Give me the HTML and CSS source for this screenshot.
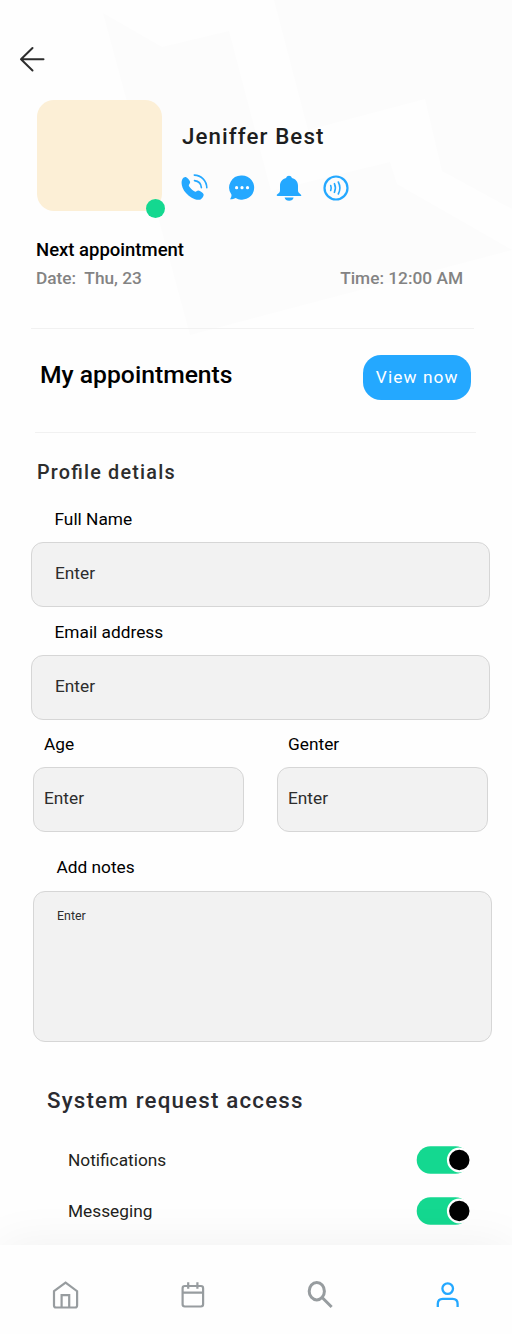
FILE: index.html
```html
<!DOCTYPE html>
<html lang="en">
<head>
<meta charset="utf-8">
<title>Profile</title>
<link rel="stylesheet" href="styles.css">
</head>
<body>
<div class="screen">
  <svg class="backdrop" width="512" height="340" viewBox="0 0 512 340" aria-hidden="true">
    <path d="M103 13 162 47 229 31 271 191 390 162 397 184 512 250 190 335Z"/>
    <path d="M274 0H512V209L442 171 425 99 308 130Z"/>
  </svg>
  <header class="topbar">
    <svg class="back" width="28" height="28" viewBox="0 0 28 28"><path d="M25.500 14.300H3M14.500 3 3 14.300l11.500 11.200"/></svg>
  </header>
  <section class="person">
    <div class="avatar"><span class="status"></span></div>
    <div class="person-info">
      <h1 class="name">Jeniffer Best</h1>
      <div class="actions">
        <svg width="28" height="28" viewBox="0 0 28 28">
          <path class="solid" d="M1.300 5.200C2.200 3.800 3.600 2.900 4.800 3.100 6.400 3.900 8 5.700 9 7.600 9.500 8.800 8.700 9.700 8 10.700 7.600 11.400 8 12.300 8.800 13.300 10.400 15.400 12.300 17.100 14.300 17.800 15.400 18.100 16 16.600 17.300 16.600 19.300 17 21.900 18.700 22.600 20.200 23 21.800 21.600 24.200 19.600 25.400 17.400 26.500 13.400 25.400 10.700 23.700 6.700 21.300 3.100 17.700 1.600 13.700.4 10.400.2 7.400 1.300 5.200Z"/>
          <path class="wave" d="M13.500 6.600c4 .5 6.600 3.200 6.900 7M13.300 1.100c7 .2 12.300 5.500 12.500 12.700"/>
        </svg>
        <svg width="28" height="28" viewBox="0 0 28 28">
          <path class="solid" d="M14 1.500a12.100 12.100 0 1 1-6.300 22.400C5.800 24.800 3.700 25.400 2 25.200c1-1.200 1.600-2.800 1.500-4.500A12.100 12.100 0 0 1 14 1.500Z"/>
          <g class="dots"><circle cx="8.600" cy="13.700" r="1.600"/><circle cx="14" cy="13.700" r="1.600"/><circle cx="19.500" cy="13.700" r="1.600"/></g>
        </svg>
        <svg width="28" height="28" viewBox="0 0 28 28">
          <path class="solid" d="M14 1.700c1.500 0 2.400.9 2.900 2.200 3.700 1.100 6.100 3.700 6.100 7.800v4.900c0 1.700 1.300 2.900 2.700 3.800 1 .7.700 1.700-.3 1.700H2.700c-1.100 0-1.400-1.100-.4-1.800C3.700 19.300 5 18.200 5 16.500v-4.800c0-4.100 2.500-6.700 6.100-7.800.5-1.300 1.400-2.200 2.900-2.200ZM9.600 23.400h9c-.5 2.100-2.100 3.300-4.500 3.300s-4-1.200-4.500-3.300Z"/>
        </svg>
        <svg width="28" height="28" viewBox="0 0 28 28">
          <circle class="ring" cx="14" cy="14" r="11.500"/>
          <path class="wave" d="M8.700 11.500q1 2.500 0 5M12.400 9.700q2 4.300 0 8.600M16.300 8q3.200 6 0 12"/>
        </svg>
      </div>
    </div>
  </section>
  <section class="next">
    <h2 class="next-title">Next appointment</h2>
    <div class="next-row"><span class="date">Date:&nbsp; Thu, 23</span><span class="time">Time: 12:00 AM</span></div>
  </section>
  <section class="appointments">
    <h2 class="appointments-title">My appointments</h2>
    <button class="view">View now</button>
  </section>
  <section class="profile">
    <h2 class="profile-title">Profile detials</h2>
    <div class="field"><span class="label">Full Name</span><div class="box">Enter</div></div>
    <div class="field"><span class="label">Email address</span><div class="box">Enter</div></div>
    <div class="pair">
      <div class="field"><span class="label">Age</span><div class="box">Enter</div></div>
      <div class="field"><span class="label">Genter</span><div class="box">Enter</div></div>
    </div>
    <div class="field notes"><span class="label">Add notes</span><div class="box">Enter</div></div>
  </section>
  <section class="access">
    <h2 class="access-title">System request access</h2>
    <div class="access-row"><span>Notifications</span>
      <svg width="54" height="28" viewBox="0 0 54 28"><rect class="track" x=".7" y=".3" width="52.500" height="27.500" rx="13.750"/><circle class="knob" cx="43.300" cy="14" r="11.300"/></svg></div>
    <div class="access-row"><span>Messeging</span>
      <svg width="54" height="28" viewBox="0 0 54 28"><rect class="track" x=".7" y=".3" width="52.500" height="27.500" rx="13.750"/><circle class="knob" cx="43.300" cy="14" r="11.300"/></svg></div>
  </section>
  <nav class="tabs">
    <svg width="32" height="32" viewBox="0 0 32 32"><path d="M5 12.200 16.600 3.600l11.500 8.600v14.300q0 2-2 2H7q-2 0-2-2ZM12.600 28V16.200h7.600V28"/></svg>
    <svg width="32" height="32" viewBox="0 0 32 32"><rect x="5.600" y="7" width="20.500" height="20.500" rx="2.200"/><path d="M5.600 13.600h20.500M11.200 3.300v6.500M20.400 3.300v6.500"/></svg>
    <svg class="search" width="32" height="32" viewBox="0 0 32 32"><ellipse cx="12.800" cy="12.200" rx="7.600" ry="8.700"/><path d="m18.100 18.500 9.500 9.500"/></svg>
    <svg class="active" width="32" height="32" viewBox="0 0 32 32"><circle cx="15.700" cy="9.600" r="5.300"/><path d="M5.800 28v-3.200q0-5 5-5h9.800q5 0 5 5V28"/></svg>
  </nav>
</div>
</body>
</html>
```
FILE: styles.css
```css
* { box-sizing: border-box; }
body { margin: 0; background: #fefefe; font-family: Roboto, "Liberation Sans", sans-serif; }
h1, h2 { margin: 0; font-weight: 500; }
svg { display: block; flex: none; }

.screen {
  position: relative;
  isolation: isolate;
  width: 512px;
  height: 1334px;
  overflow: hidden;
  display: flex;
  flex-direction: column;
  color: #000;
  font-size: 17.3px;
  line-height: 20px;
  white-space: nowrap;
}
.backdrop { position: absolute; inset: 0 auto auto 0; z-index: -1; fill: #fcfcfc; }

.topbar { height: 100px; padding: 45px 0 0 18px; }
.back { fill: none; stroke: #2d2d2d; stroke-width: 2; stroke-linecap: round; stroke-linejoin: round; }

.person { display: flex; height: 112px; padding-left: 37px; gap: 20px; }
.avatar { position: relative; width: 125px; height: 111px; border-radius: 17px; background: #fcefd6; }
.status { position: absolute; right: -3px; bottom: -7px; width: 19px; height: 19px; border-radius: 50%; background: #14d890; }
.name { margin-top: 22px; font-size: 22.3px; line-height: 28px; letter-spacing: 1.1px; color: #1d1e20; }
.actions { display: flex; gap: 19.100px; margin-top: 23.500px; margin-left: -1px; }
.solid { fill: #24a8ff; }
.wave { fill: none; stroke: #24a8ff; stroke-width: 1.6; stroke-linecap: round; }
.ring { fill: none; stroke: #24a8ff; stroke-width: 2.200; }
.dots { fill: #fff; }

.next { margin-left: 31px; width: 443px; height: 117px; padding: 28px 11px 0 5px; border-bottom: 1px solid #f1f1f1; }
.next-title { font-size: 18.500px; line-height: 20px; }
.next-row { display: flex; justify-content: space-between; margin-top: 8px; font-weight: 500; color: #838383; }

.appointments {
  display: flex;
  justify-content: space-between;
  margin-left: 35px;
  width: 441px;
  height: 104px;
  padding: 26px 5px 0 5px;
  border-bottom: 1px solid #f1f1f1;
}
.appointments-title { font-size: 24.700px; line-height: 40px; }
.view {
  width: 107.600px;
  height: 44.500px;
  padding: 0;
  border: 0;
  border-radius: 18px;
  background: #24a8ff;
  color: #fff;
  font: 400 17.3px Roboto, sans-serif;
  letter-spacing: 1.1px;
}

.profile { height: 610px; padding: 27px 22px 0 31px; }
.profile-title {
  margin-left: 6px;
  font-size: 19.800px;
  line-height: 26px;
  letter-spacing: 1.200px;
  font-feature-settings: "liga";
  color: #2d2d2d;
}
.field { display: flex; flex-direction: column; gap: 13px; }
.profile > .field { margin-top: 15px; }
.profile > .profile-title + .field { margin-top: 23px; }
.label { padding-left: 23.500px; }
.box {
  height: 65px;
  padding: 20px 23px;
  border: 1px solid #d6d6d6;
  border-radius: 12px;
  background: #f2f2f2;
  color: #2d2d2d;
}
.pair { display: grid; grid-template-columns: 211px 211px; gap: 33px; margin: 14px 0 0 2px; }
.pair .label { padding-left: 11px; }
.pair .box { padding-left: 10px; }
.profile > .notes { margin: 25px -3px 0 2px; gap: 14px; width: 459px; }
.notes .box { height: 151px; padding-top: 14px; font-size: 12.400px; }
.profile > .field:not(.notes) { width: 459px; }

.access { padding: 42px 42px 0 47px; color: #231f20; }
.access-title { font-size: 22.300px; line-height: 30px; letter-spacing: 1.2px; color: #2b2b30; }
.access-row { display: flex; align-items: center; justify-content: space-between; height: 51px; padding-left: 21px; }
.access-title + .access-row { margin-top: 19px; }
.track { fill: #14d890; }
.knob { fill: #000; stroke: #fff; stroke-width: 2.200; }

.tabs {
  display: flex;
  justify-content: space-between;
  margin-top: auto;
  height: 89px;
  padding: 34px 48px 0 49px;
  background: #fefefe;
  box-shadow: 0 0 50px rgba(0, 0, 0, .06);
  fill: none;
  stroke: #979c9f;
  stroke-width: 2.200;
}
.search { stroke-width: 3; }
.active { stroke: #24a8ff; stroke-width: 2.300; }
```
